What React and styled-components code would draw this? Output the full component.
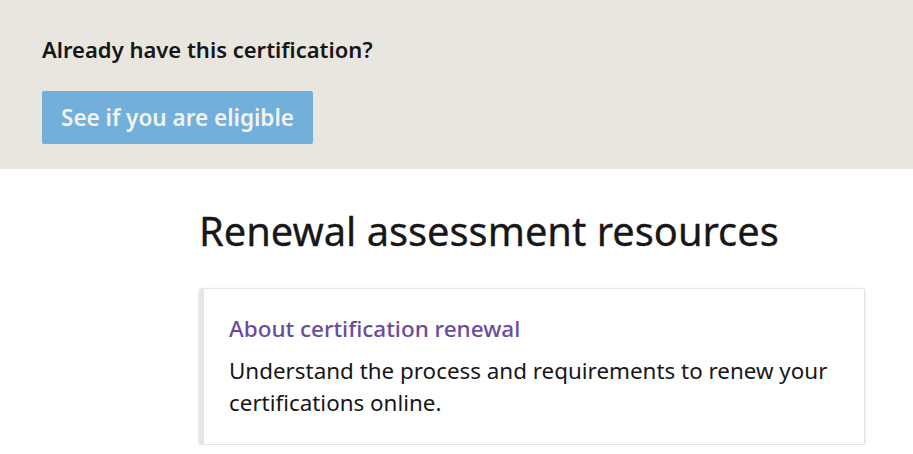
import React from "react";
import styled, { createGlobalStyle } from "styled-components";

const GlobalStyle = createGlobalStyle`
    body {
        margin: 0;
        background: #ffffff;
        font-family: "Noto Sans", "Open Sans", sans-serif;
        color: #171717;
    }
`;

const Banner = styled.section`
    background: #e8e6df;
    height: 169px;
    box-sizing: border-box;
    padding: 34px 42px 0;
`;

const BannerTitle = styled.h2`
    margin: 0 0 27px;
    font-size: 22px;
    font-weight: 600;
    line-height: 30px;
`;

const EligibleButton = styled.button`
    display: block;
    width: 271px;
    height: 53px;
    border: none;
    border-radius: 2px;
    background: #72afdb;
    color: #f3f3f0;
    font-family: inherit;
    font-size: 22.5px;
    font-weight: 600;
    padding: 0;
`;

const Main = styled.main`
    padding: 35px 0 0 199px;
    width: 666px;
`;

const Heading = styled.h1`
    margin: 0 0 30px;
    font-size: 39.8px;
    font-weight: 400;
    line-height: 54px;
    -webkit-text-stroke: 0.3px #171717;
`;

const Card = styled.a`
    display: block;
    box-sizing: border-box;
    height: 157px;
    padding: 24px 30px 0 25px;
    border: 1px solid #e3e3e3;
    border-left: 5px solid #e8e6df;
    border-radius: 2px;
    box-shadow: 0 1px 3px rgba(0, 0, 0, 0.12);
    text-decoration: none;
    color: inherit;
`;

const CardTitle = styled.h3`
    margin: 0 0 10px;
    font-size: 22.5px;
    font-weight: 500;
    line-height: 32px;
    color: #6a4c9d;
`;

const CardText = styled.p`
    margin: 0;
    font-size: 22.4px;
    line-height: 32px;
    color: #171717;
`;

export default function App() {
    return (
        <>
            <GlobalStyle />
            <Banner>
                <BannerTitle>Already have this certification?</BannerTitle>
                <EligibleButton>See if you are eligible</EligibleButton>
            </Banner>
            <Main>
                <Heading>Renewal assessment resources</Heading>
                <Card href="#">
                    <CardTitle>About certification renewal</CardTitle>
                    <CardText>
                        Understand the process and requirements to renew your certifications online.
                    </CardText>
                </Card>
            </Main>
        </>
    );
}
